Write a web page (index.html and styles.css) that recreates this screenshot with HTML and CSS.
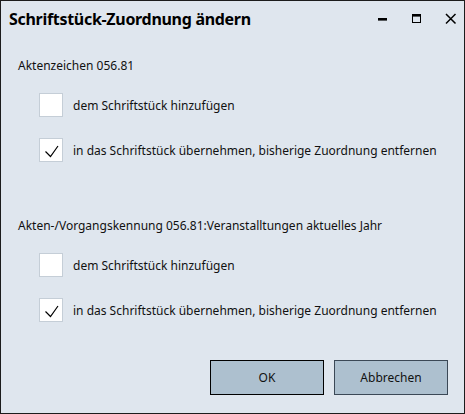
FILE: index.html
```html
<!DOCTYPE html>
<html lang="de">
<head>
<meta charset="utf-8">
<title>Schriftstück-Zuordnung ändern</title>
<link rel="stylesheet" href="styles.css">
</head>
<body>
<div class="window">
  <div class="titlebar">
    <span class="title">Schriftstück-Zuordnung ändern</span>
    <div class="controls">
      <svg class="ctl" width="12" height="12" viewBox="0 0 12 12"><rect x="1" y="5" width="9" height="2.6" fill="#000"/></svg>
      <svg class="ctl" width="12" height="12" viewBox="0 0 12 12"><rect x="1.5" y="1.5" width="8" height="8" fill="none" stroke="#000" stroke-width="1"/><rect x="1" y="1" width="9" height="2.6" fill="#000"/></svg>
      <svg class="ctl" width="12" height="12" viewBox="0 0 12 12"><path d="M1 1 L10.5 10.5 M10.5 1 L1 10.5" stroke="#000" stroke-width="1.5" fill="none"/></svg>
    </div>
  </div>
  <div class="content">
    <section class="group">
      <div class="heading">Aktenzeichen 056.81</div>
      <div class="option"><span class="box"></span><span class="label">dem Schriftstück hinzufügen</span></div>
      <div class="option"><span class="box"><svg width="22" height="22" viewBox="0 0 22 22"><path d="M5.5 12.5 L10.5 17.5 L18 7" stroke="#000" stroke-width="1.2" fill="none"/></svg></span><span class="label">in das Schriftstück übernehmen, bisherige Zuordnung entfernen</span></div>
    </section>
    <section class="group second">
      <div class="heading">Akten-/Vorgangskennung 056.81:Veranstalltungen aktuelles Jahr</div>
      <div class="option"><span class="box"></span><span class="label">dem Schriftstück hinzufügen</span></div>
      <div class="option"><span class="box"><svg width="22" height="22" viewBox="0 0 22 22"><path d="M5.5 12.5 L10.5 17.5 L18 7" stroke="#000" stroke-width="1.2" fill="none"/></svg></span><span class="label">in das Schriftstück übernehmen, bisherige Zuordnung entfernen</span></div>
    </section>
  </div>
  <div class="buttons">
    <div class="btn primary">OK</div>
    <div class="btn">Abbrechen</div>
  </div>
</div>
</body>
</html>
```
FILE: styles.css
```css
html, body {
  margin: 0;
  padding: 0;
  background: #dfe6ee;
}
.window {
  width: 465px;
  height: 414px;
  box-sizing: border-box;
  border: 1px solid #1c1c1c;
  background: #dfe6ee;
  display: flex;
  flex-direction: column;
  font-family: "Noto Sans", "Open Sans", sans-serif;
  color: #111;
}
.titlebar {
  height: 36px;
  display: flex;
  align-items: center;
  padding-left: 8px;
  padding-right: 7px;
}
.title {
  font-size: 16px;
  font-weight: bold;
  color: #000;
  flex: 1;
  letter-spacing: -0.3px;
}
.controls {
  display: flex;
  gap: 22px;
  align-items: center;
}
.ctl {
  display: block;
}
.content {
  padding-left: 17px;
  display: flex;
  flex-direction: column;
}
.group {
  display: flex;
  flex-direction: column;
  gap: 21px;
  padding-top: 21px;
}
.group.second {
  padding-top: 56px;
}
.heading {
  font-size: 12px;
  line-height: 16px;
  margin-bottom: -2px;
}
.option {
  display: flex;
  align-items: center;
  height: 24px;
  margin-left: 21px;
  font-size: 12px;
}
.box {
  width: 22px;
  height: 22px;
  border: 1px solid #c5ced7;
  background: #fff;
  margin-right: 10px;
  display: block;
}
.box svg {
  display: block;
}
.buttons {
  margin-top: auto;
  display: flex;
  justify-content: flex-end;
  gap: 10px;
  padding: 0 16px 18px 0;
}
.btn {
  width: 112px;
  height: 33px;
  border: 1px solid #3b4856;
  background: #adc0cf;
  font-size: 12px;
  display: flex;
  align-items: center;
  justify-content: center;
  color: #111;
}
.btn.primary {
  border-color: #000;
}
```
